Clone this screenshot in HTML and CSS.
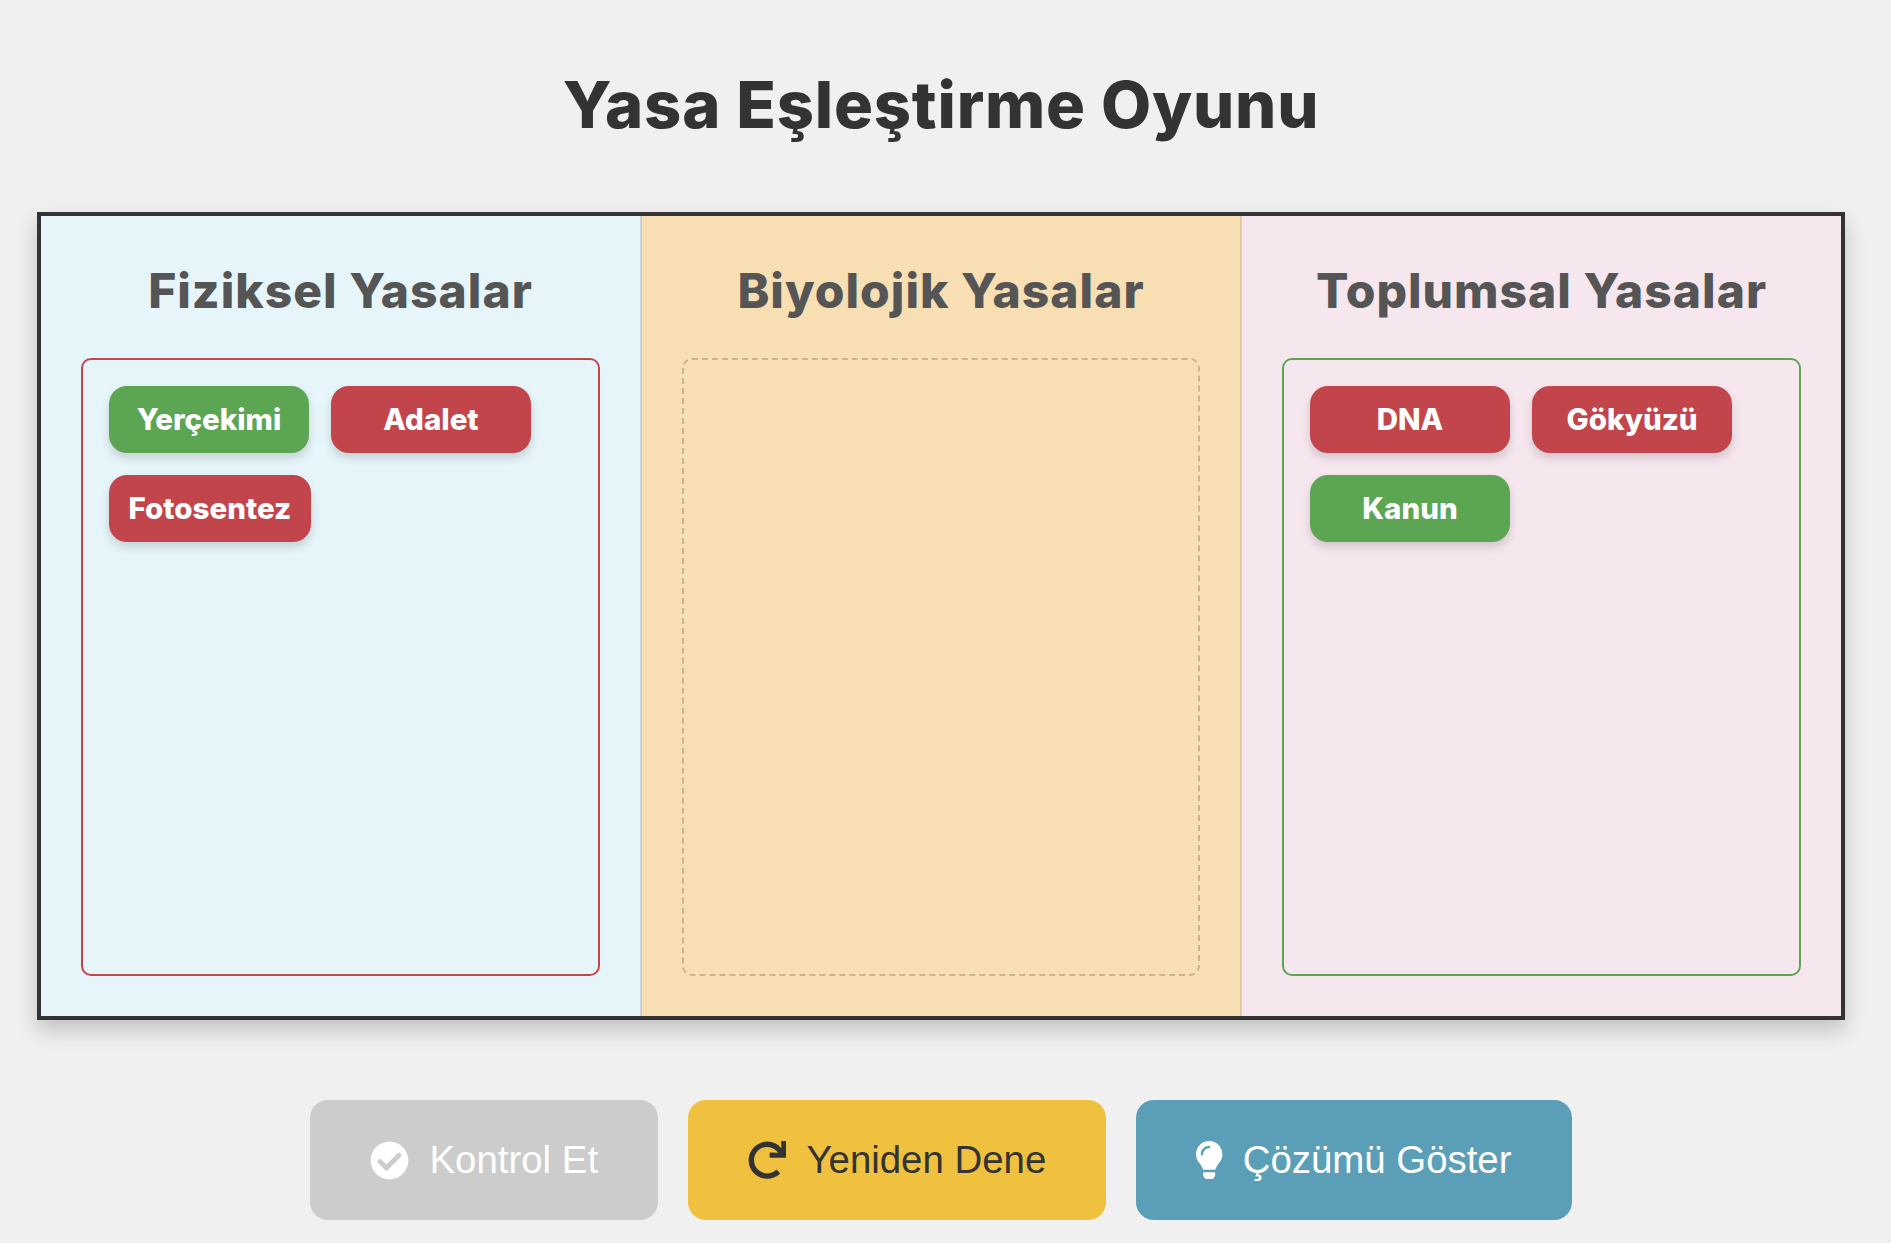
FILE: index.html
```html
<!DOCTYPE html>
<html lang="tr">
<head>
    <meta charset="UTF-8">
    <meta name="viewport" content="width=device-width, initial-scale=1.0">
    <title>Yasa Eşleştirme Oyunu</title>
    <link rel="stylesheet" href="styles.css">
</head>
<body>
    <h1 class="page-title">Yasa Eşleştirme Oyunu</h1>

    <main class="board">
        <section class="column column-physical">
            <h2>Fiziksel Yasalar</h2>
            <div class="drop-zone zone-wrong">
                <div class="chip chip-right">Yerçekimi</div>
                <div class="chip chip-wrong">Adalet</div>
                <div class="chip chip-wrong">Fotosentez</div>
            </div>
        </section>
        <section class="column column-biological">
            <h2>Biyolojik Yasalar</h2>
            <div class="drop-zone zone-empty"></div>
        </section>
        <section class="column column-social">
            <h2>Toplumsal Yasalar</h2>
            <div class="drop-zone zone-right">
                <div class="chip chip-wrong">DNA</div>
                <div class="chip chip-wrong">Gökyüzü</div>
                <div class="chip chip-right">Kanun</div>
            </div>
        </section>
    </main>

    <div class="actions">
        <button class="btn btn-check">
            <svg class="icon icon-check" viewBox="0 0 512 512"><path d="M504 256c0 136.967-111.033 248-248 248S8 392.967 8 256 119.033 8 256 8s248 111.033 248 248zM227.314 387.314l184-184c6.248-6.248 6.248-16.379 0-22.627l-22.627-22.627c-6.248-6.249-16.379-6.249-22.628 0L216 308.118l-70.059-70.059c-6.248-6.248-16.379-6.248-22.628 0l-22.627 22.627c-6.248 6.248-6.248 16.379 0 22.627l104 104c6.249 6.249 16.379 6.249 22.628.001z"/></svg>
            Kontrol Et
        </button>
        <button class="btn btn-retry">
            <svg class="icon" viewBox="0 0 512 512"><path d="M500.33 0h-47.41a12 12 0 0 0-12 12.57l4 82.76A247.42 247.42 0 0 0 256 8C119.34 8 7.9 119.53 8 256.19 8.1 393.07 119.1 504 256 504a247.1 247.1 0 0 0 166.18-63.91 12 12 0 0 0 .48-17.43l-34-34a12 12 0 0 0-16.38-.55A176 176 0 1 1 402.1 157.8l-101.53-4.87a12 12 0 0 0-12.57 12v47.41a12 12 0 0 0 12 12h200.33a12 12 0 0 0 12-12V12a12 12 0 0 0-12-12z"/></svg>
            Yeniden Dene
        </button>
        <button class="btn btn-solution">
            <svg class="icon icon-bulb" viewBox="0 0 352 512"><path d="M96.06 454.35c.01 6.29 1.87 12.45 5.36 17.69l17.09 25.69a31.99 31.99 0 0 0 26.64 14.28h61.71a31.99 31.99 0 0 0 26.64-14.28l17.09-25.69a31.989 31.989 0 0 0 5.36-17.69l.04-38.35H96.01l.05 38.35zM0 176c0 44.37 16.45 84.85 43.56 115.78 16.52 18.85 42.36 58.23 52.21 91.45.04.26.07.52.11.78h160.24c.04-.26.07-.51.11-.78 9.85-33.22 35.69-72.6 52.21-91.45C335.55 260.85 352 220.37 352 176 352 78.61 272.91-.3 175.45 0 73.44.31 0 82.97 0 176zm176-80c-44.11 0-80 35.89-80 80 0 8.84-7.16 16-16 16s-16-7.16-16-16c0-61.76 50.24-112 112-112 8.84 0 16 7.16 16 16s-7.16 16-16 16z"/></svg>
            Çözümü Göster
        </button>
    </div>
</body>
</html>
```

FILE: styles.css
```css
* {
    margin: 0;
    padding: 0;
    box-sizing: border-box;
}

body {
    font-family: 'Liberation Sans', Arial, sans-serif;
    background-color: #f0f0f0;
    color: #333;
    padding: 0 46px 23px 37px;
    overflow: hidden;
}

.page-title {
    font-family: 'Inter', sans-serif;
    font-size: 65px;
    font-weight: 800;
    letter-spacing: 0.8px;
    line-height: 70px;
    text-align: center;
    color: #333;
    padding-top: 70px;
    margin-bottom: 72px;
}

.board {
    display: grid;
    grid-template-columns: repeat(3, 1fr);
    height: 808px;
    border: 4px solid #333;
    box-shadow: 0 10px 20px rgba(0,0,0,0.2);
}

.column {
    display: flex;
    flex-direction: column;
    padding: 40px;
}

.column h2 {
    font-family: 'Inter', sans-serif;
    font-size: 48px;
    font-weight: 800;
    letter-spacing: 1px;
    line-height: 56px;
    text-align: center;
    color: #555;
    margin-top: 7px;
    margin-bottom: 39px;
}

.column-physical {
    background-color: #e6f5fa;
    border-right: 1px solid rgba(0,0,0,0.1);
}

.column-biological {
    background-color: #f7dfb3;
    border-left: 1px solid rgba(0,0,0,0.1);
    border-right: 1px solid rgba(0,0,0,0.1);
}

.column-social {
    background-color: #f6e6ee;
    border-left: 1px solid rgba(0,0,0,0.1);
}

.drop-zone {
    flex: 1;
    display: flex;
    flex-wrap: wrap;
    align-content: flex-start;
    gap: 22px;
    padding: 26px;
    border-radius: 10px;
}

.zone-wrong {
    border: 2px solid #c1454b;
}

.zone-right {
    border: 2px solid #5ba553;
}

.zone-empty {
    border: 2px dashed #cdb389;
}

.chip {
    display: flex;
    align-items: center;
    justify-content: center;
    min-width: 200px;
    height: 67px;
    padding: 0 19.5px 2px;
    border-radius: 18px;
    font-family: 'Inter', sans-serif;
    font-size: 29.5px;
    font-weight: 800;
    color: white;
    box-shadow: 0 5px 10px rgba(0,0,0,0.15);
}

.chip-right {
    background-color: #5ba553;
}

.chip-wrong {
    background-color: #c1454b;
}

.actions {
    display: flex;
    justify-content: center;
    gap: 30px;
    margin-top: 80px;
}

.btn {
    display: flex;
    align-items: center;
    gap: 20px;
    height: 120px;
    padding: 0 60px;
    border: none;
    border-radius: 18px;
    font-family: inherit;
    font-size: 38.4px;
}

.icon {
    width: 38.4px;
    height: 38.4px;
    fill: currentColor;
}

.icon-check {
    width: 39px;
    height: 39px;
}

.icon-bulb {
    width: 26.4px;
}

.btn-check {
    background-color: #ccc;
    color: white;
}

.btn-retry {
    background-color: #efc13f;
    color: #333;
}

.btn-solution {
    background-color: #5a9fb7;
    color: white;
}
```
